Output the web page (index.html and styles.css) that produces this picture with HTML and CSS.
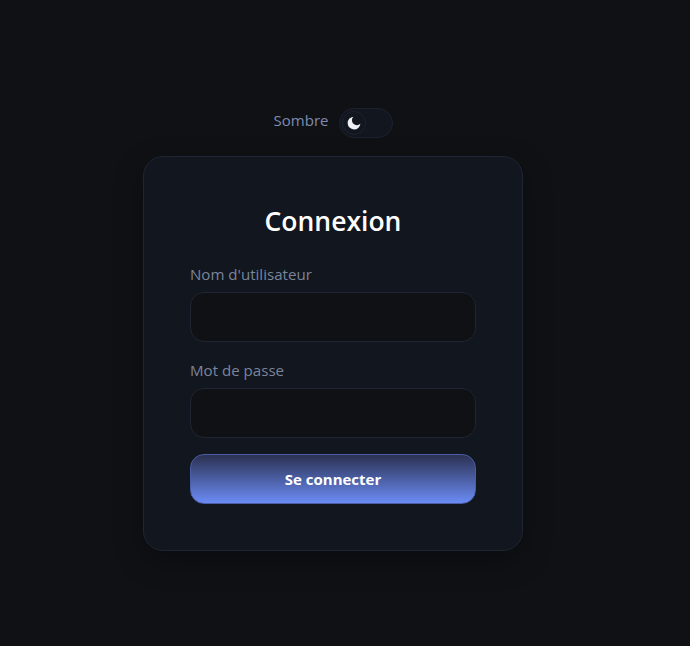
FILE: index.html
```html
<!DOCTYPE html>
<html lang="fr">
<head>
    <meta charset="UTF-8">
    <meta name="viewport" content="width=device-width, initial-scale=1.0">
    <title>Connexion</title>
    <link rel="stylesheet" href="styles.css">
</head>
<body>
    <div class="theme-row">
        <span class="theme-label">Sombre</span>
        <button class="theme-toggle" type="button" aria-label="Changer de thème">
            <span class="theme-knob">
                <svg class="moon" viewBox="0 0 14 14" width="14" height="14">
                    <path d="M6.4 0.7 A6.4 6.4 0 1 0 13.4 7.7 A4.9 4.9 0 0 1 6.4 0.7 Z" fill="#eef0f6"/>
                </svg>
            </span>
        </button>
    </div>

    <form class="card">
        <h1>Connexion</h1>
        <label class="field">
            <span>Nom d'utilisateur</span>
            <input type="text">
        </label>
        <label class="field">
            <span>Mot de passe</span>
            <input type="password">
        </label>
        <button class="submit" type="button">Se connecter</button>
    </form>
</body>
</html>
```

FILE: styles.css
```css
* {
    box-sizing: border-box;
}

body {
    margin: 0;
    height: 646px;
    padding: 108px 24px 0 0;
    background-color: #0f1114;
    font-family: "Open Sans", "Noto Sans", sans-serif;
    display: flex;
    flex-direction: column;
    align-items: center;
    overflow: hidden;
}

.theme-row {
    display: flex;
    align-items: center;
    gap: 11px;
    height: 30px;
    margin-bottom: 18px;
    padding-left: 1px;
}

.theme-label {
    font-size: 15px;
    color: #7f8bb0;
    position: relative;
    top: -3px;
}

.theme-toggle {
    width: 54px;
    height: 30px;
    padding: 2px;
    background-color: #12161f;
    border: 1px solid #1c2230;
    border-radius: 15px;
    display: flex;
    align-items: center;
}

.theme-knob {
    width: 24px;
    height: 24px;
    border-radius: 50%;
    border: 1px solid #1c2230;
    display: flex;
    align-items: center;
    justify-content: center;
}

.card {
    width: 380px;
    height: 395px;
    padding: 46px;
    background-color: #12161e;
    border: 1px solid #1f2532;
    border-radius: 20px;
    box-shadow: 0 10px 30px rgba(0, 0, 0, 0.3);
    display: flex;
    flex-direction: column;
}

h1 {
    margin: 0 0 24px;
    font-size: 26.5px;
    line-height: 36px;
    font-weight: 600;
    color: #ffffff;
    text-align: center;
}

.field {
    display: flex;
    flex-direction: column;
    gap: 6px;
    margin-bottom: 17px;
}

.field span {
    font-size: 15.1px;
    line-height: 23px;
    color: #7a859c;
}

.field input {
    height: 50px;
    background-color: #0f1114;
    border: 1px solid #1f2532;
    border-radius: 14px;
    outline: none;
}

.submit {
    height: 50px;
    margin-top: -1px;
    background: linear-gradient(180deg, #2b3152 0%, #6b8cf5 100%);
    border: 1px solid #4a5da6;
    border-radius: 14px;
    color: #ffffff;
    font-family: inherit;
    font-size: 15px;
    font-weight: 700;
}
```
